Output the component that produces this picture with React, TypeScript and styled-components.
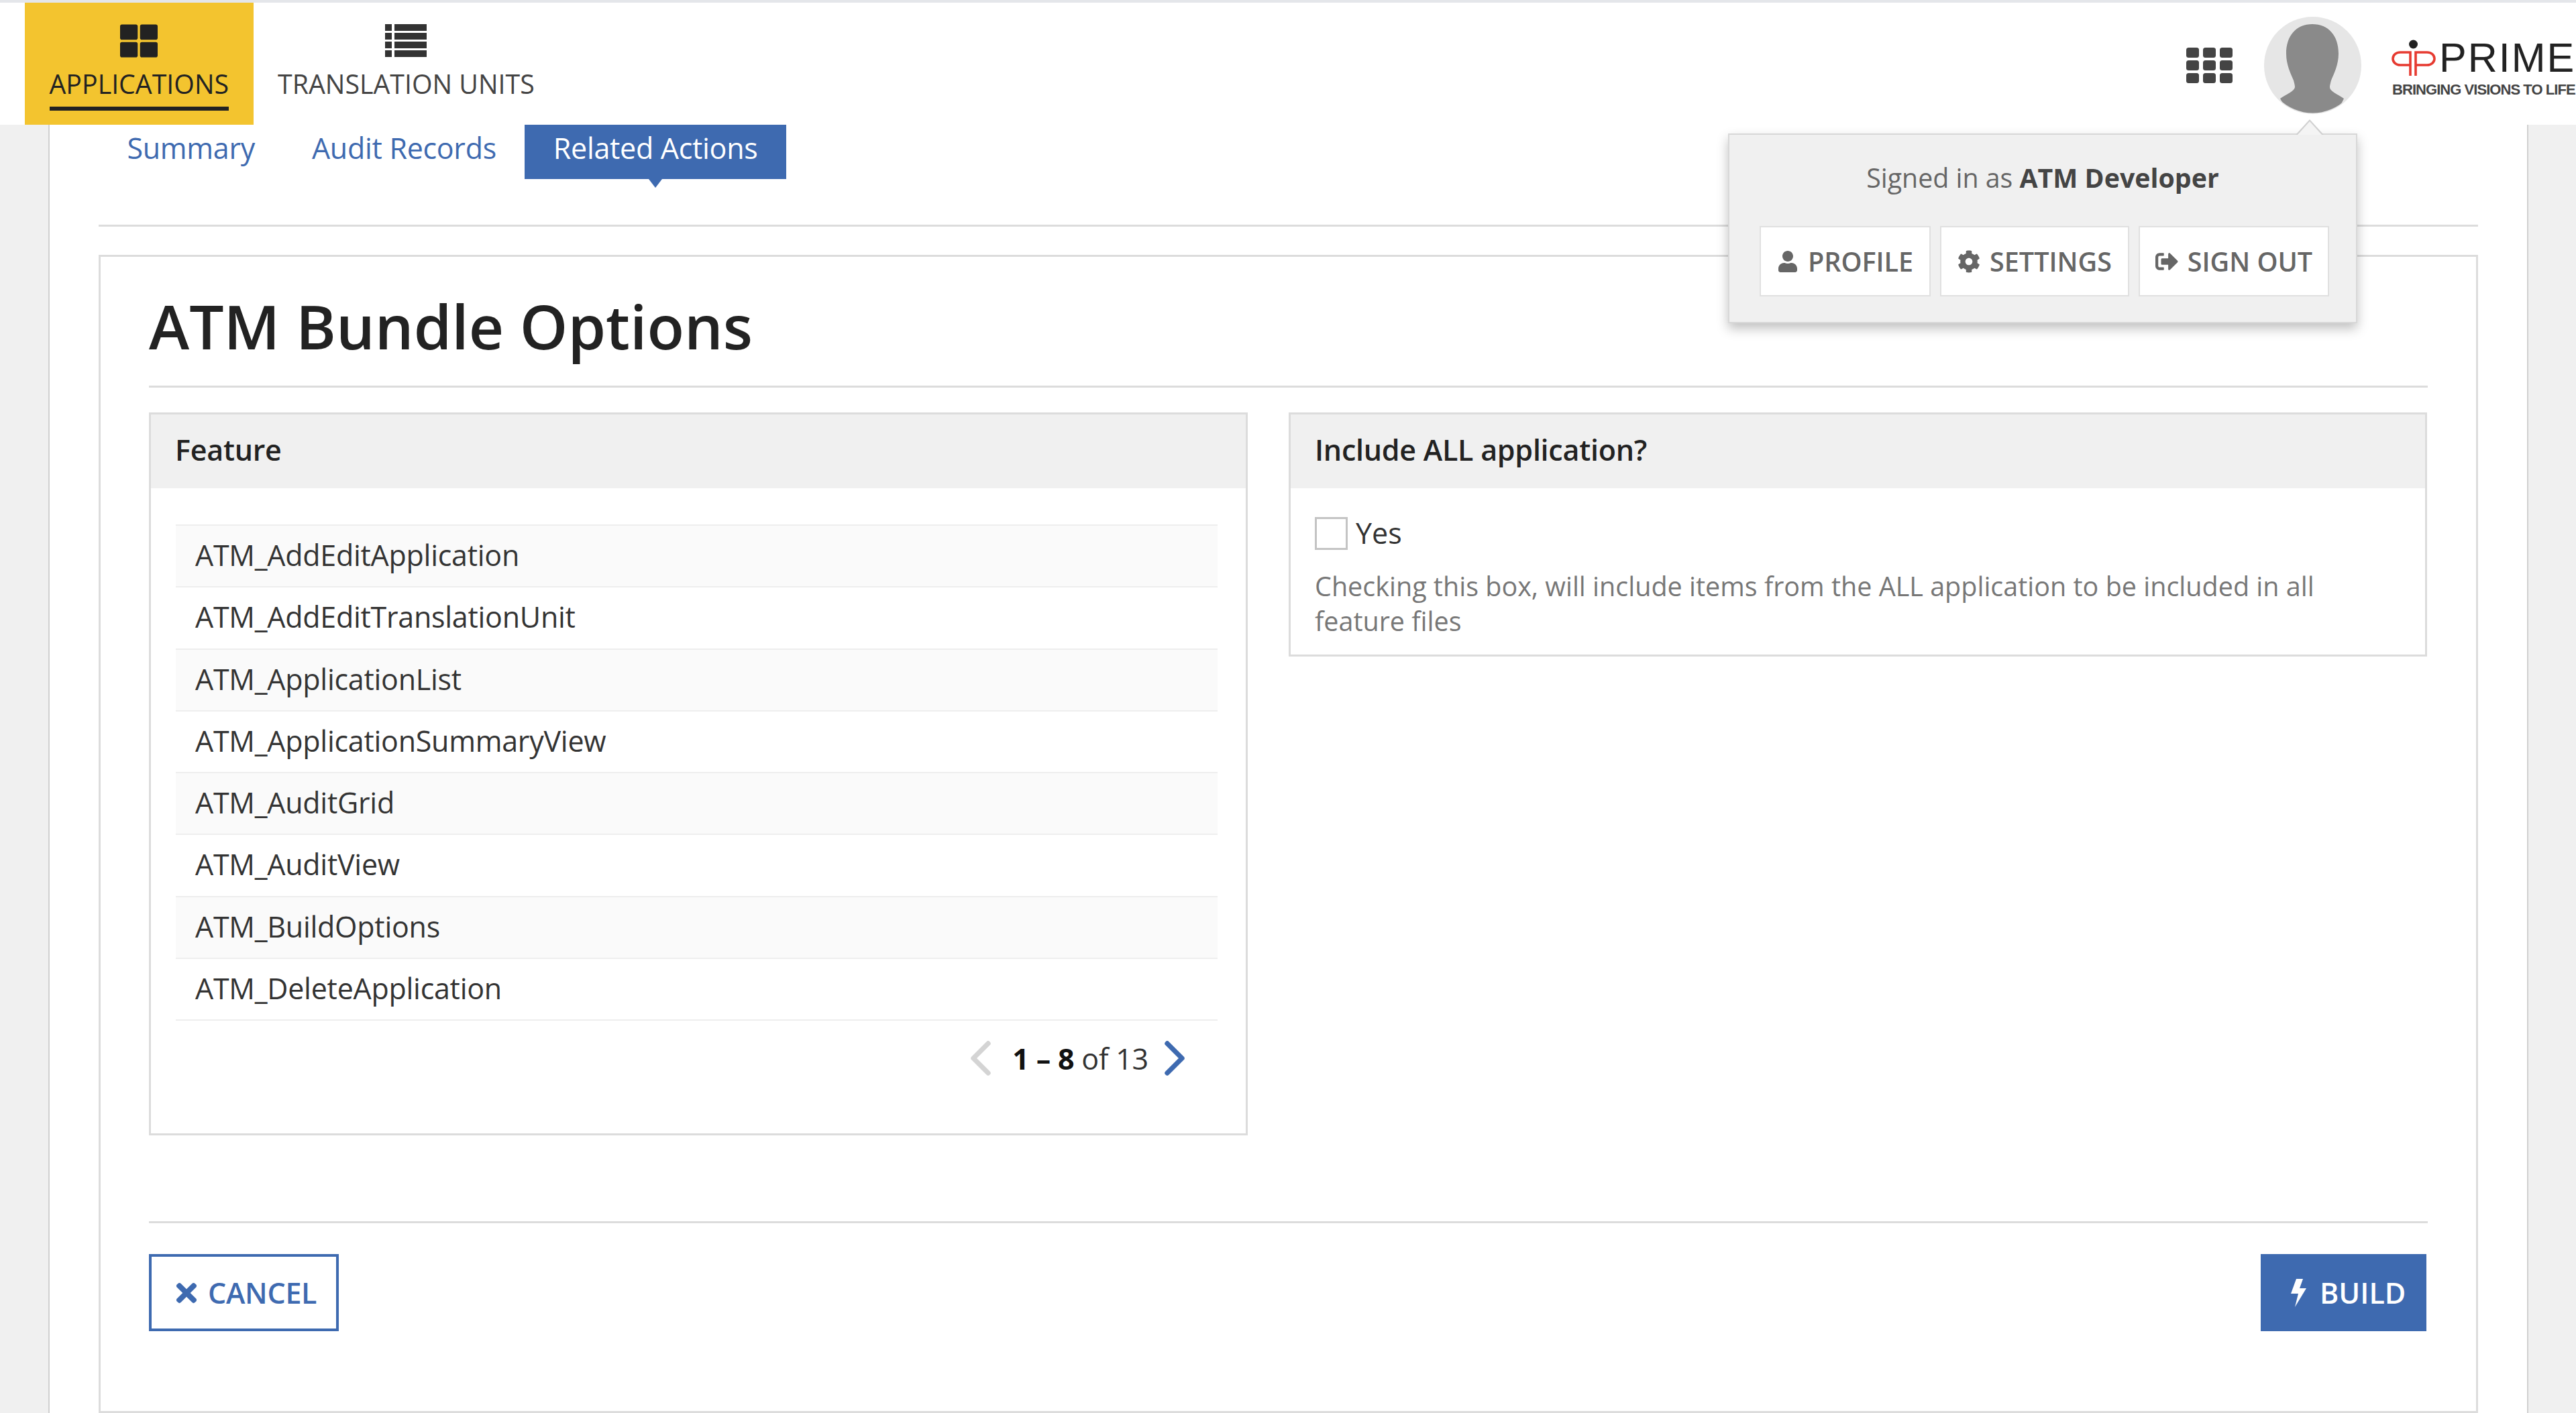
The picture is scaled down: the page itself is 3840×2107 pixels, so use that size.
import React from 'react';
import styled, { createGlobalStyle } from 'styled-components';
import { FaUser, FaCog, FaSignOutAlt, FaTimes, FaThLarge } from 'react-icons/fa';
import { ChevronLeft, ChevronRight } from 'lucide-react';

const BLUE = '#3e6ab0';
const LINE = '#dcdcdc';

const FEATURES = [
  'ATM_AddEditApplication',
  'ATM_AddEditTranslationUnit',
  'ATM_ApplicationList',
  'ATM_ApplicationSummaryView',
  'ATM_AuditGrid',
  'ATM_AuditView',
  'ATM_BuildOptions',
  'ATM_DeleteApplication',
];

const ListIcon = () => (
  <svg width="62" height="50" viewBox="0 0 62 50" fill="#333">
    {[0, 13, 26, 39].map((y) => (
      <g key={y}>
        <rect x="0" y={y} width="10" height="10" />
        <rect x="14" y={y} width="48" height="10" />
      </g>
    ))}
  </svg>
);

const GridIcon = () => (
  <svg width="69" height="53" viewBox="0 0 69 53" fill="#444">
    {[0, 19, 38].map((y) =>
      [0, 25, 50].map((x) => <rect key={`${x}-${y}`} x={x} y={y} width="19" height="15" rx="3.5" />),
    )}
  </svg>
);

const BoltIcon = () => (
  <svg width="26" height="42" viewBox="0 0 26 42" fill="#fff">
    <path d="M9 0h10l-5 14h10L7 42l5-20H1z" />
  </svg>
);

const AvatarIcon = () => (
  <svg width="145" height="145" viewBox="0 0 145 145">
    <defs>
      <clipPath id="avatar-clip">
        <circle cx="72.5" cy="72.5" r="71" />
      </clipPath>
    </defs>
    <circle cx="72.5" cy="72.5" r="72.5" fill="#e6e6e6" />
    <path
      clipPath="url(#avatar-clip)"
      fill="#8a8a8a"
      d="M72 11C48 11 33 28 33 55c0 17 7 30 11 40 1 4 2 7 2 10-1 6-12 10-22 17L40 150h65l14-28c-10-7-21-11-21-17 0-3 1-6 2-10 4-10 11-23 11-40 0-27-15-44-39-44z"
    />
  </svg>
);

const LogoMark = () => (
  <svg width="66" height="54" viewBox="0 0 66 54" fill="none">
    <circle cx="32.5" cy="7" r="6.5" fill="#222" />
    <path
      d="M28 54V19H13C7 19 2 23 2 28.5S7 38 13 38H28M36 54V19H53C59 19 64 23 64 28.5S59 38 53 38H36"
      stroke="#e63a30"
      strokeWidth="3.6"
    />
  </svg>
);

const App: React.FC = () => {
  return (
    <Page>
      <GlobalStyle />
      <TopBar>
        <NavItem $active>
          <NavIcon>
            <FaThLarge size={56} color="#222" />
          </NavIcon>
          <NavLabel $active>APPLICATIONS</NavLabel>
        </NavItem>
        <NavItem>
          <NavIcon>
            <ListIcon />
          </NavIcon>
          <NavLabel>TRANSLATION UNITS</NavLabel>
        </NavItem>
        <HeaderRight>
          <GridIcon />
          <AvatarIcon />
          <Logo>
            <LogoTop>
              <LogoMark />
              <LogoName>PRIME</LogoName>
            </LogoTop>
            <LogoTag>BRINGING VISIONS TO LIFE</LogoTag>
          </Logo>
        </HeaderRight>
        <UserPopover>
          <SignedIn>
            Signed in as <strong>ATM Developer</strong>
          </SignedIn>
          <PopoverButtons>
            <PopoverButton $width={255}>
              <FaUser size={32} /> PROFILE
            </PopoverButton>
            <PopoverButton $width={282}>
              <FaCog size={34} /> SETTINGS
            </PopoverButton>
            <PopoverButton $width={284}>
              <FaSignOutAlt size={34} /> SIGN OUT
            </PopoverButton>
          </PopoverButtons>
        </UserPopover>
      </TopBar>

      <Content>
        <Tabs>
          <Tab>Summary</Tab>
          <Tab>Audit Records</Tab>
          <Tab $active>Related Actions</Tab>
        </Tabs>
        <Card>
          <Title>ATM Bundle Options</Title>
          <Panels>
            <FeaturePanel>
              <PanelHeader>Feature</PanelHeader>
              <FeatureList>
                {FEATURES.map((name) => (
                  <FeatureRow key={name}>{name}</FeatureRow>
                ))}
              </FeatureList>
              <Pager>
                <ChevronLeft size={88} color="#d4d4d4" strokeWidth={2} />
                <PagerText>
                  <b>1 – 8</b> of 13
                </PagerText>
                <ChevronRight size={88} color={BLUE} strokeWidth={2} />
              </Pager>
            </FeaturePanel>
            <IncludePanel>
              <PanelHeader>Include ALL application?</PanelHeader>
              <IncludeBody>
                <CheckRow>
                  <CheckBox />
                  Yes
                </CheckRow>
                <HelpText>
                  Checking this box, will include items from the ALL application to be included in all feature files
                </HelpText>
              </IncludeBody>
            </IncludePanel>
          </Panels>
          <Footer>
            <CancelButton>
              <FaTimes size={44} /> CANCEL
            </CancelButton>
            <BuildButton>
              <BoltIcon /> BUILD
            </BuildButton>
          </Footer>
        </Card>
      </Content>
    </Page>
  );
};

export default App;

const GlobalStyle = createGlobalStyle`
  html, body {
    margin: 0;
    padding: 0;
    background: #f0f0f0;
  }
  * {
    box-sizing: border-box;
  }
`;

const Page = styled.div`
  width: 3840px;
  height: 2107px;
  overflow: hidden;
  background: #f0f0f0;
  font-family: 'Open Sans', 'Liberation Sans', sans-serif;
  color: #222;
`;

const TopBar = styled.header`
  position: relative;
  display: flex;
  height: 186px;
  padding-left: 37px;
  background: #fff;
  border-top: 4px solid #e4e6ea;
`;

const NavItem = styled.div<{ $active?: boolean }>`
  display: flex;
  flex-direction: column;
  align-items: center;
  padding: 29px 36.5px 0;
  background: ${({ $active }) => ($active ? '#f3c42f' : 'transparent')};
`;

const NavIcon = styled.div`
  display: flex;
  align-items: center;
  height: 56px;
`;

const NavLabel = styled.span<{ $active?: boolean }>`
  margin-top: 10px;
  padding-bottom: 8px;
  font-size: 39.3px;
  line-height: 52px;
  color: ${({ $active }) => ($active ? '#222' : '#444')};
  border-bottom: 6px solid ${({ $active }) => ($active ? '#222' : 'transparent')};
`;

const HeaderRight = styled.div`
  display: flex;
  align-items: center;
  gap: 47px;
  height: 145px;
  margin: 21px 0 0 auto;
`;

const Logo = styled.div`
  display: flex;
  flex-direction: column;
  width: 277px;
  height: 100%;
  margin-left: -4px;
  padding: 34px 0 0 2px;
  overflow: hidden;
`;

const LogoTop = styled.div`
  display: flex;
  align-items: flex-start;
  gap: 5px;
  height: 54px;
`;

const LogoName = styled.span`
  margin-top: -3px;
  font-family: 'Liberation Sans', sans-serif;
  font-size: 61px;
  letter-spacing: 2px;
  line-height: 1;
  color: #222;
`;

const LogoTag = styled.span`
  margin: 10px 0 0 1px;
  font-family: 'Liberation Sans', sans-serif;
  font-size: 22px;
  font-weight: 700;
  letter-spacing: -0.95px;
  line-height: 1;
  white-space: nowrap;
  color: #444;
`;

const UserPopover = styled.div`
  position: absolute;
  z-index: 5;
  top: 195px;
  left: 2576px;
  width: 938px;
  height: 283px;
  padding: 0 45px;
  background: #f0f0f0;
  border: 2px solid #d8d8d8;
  box-shadow: 0 8px 16px rgba(0, 0, 0, 0.25);

  &::before {
    content: '';
    position: absolute;
    top: -23px;
    right: 48px;
    border-left: 21px solid transparent;
    border-right: 21px solid transparent;
    border-bottom: 23px solid #d0d0d0;
  }

  &::after {
    content: '';
    position: absolute;
    top: -20px;
    right: 51px;
    border-left: 18px solid transparent;
    border-right: 18px solid transparent;
    border-bottom: 20px solid #f4f4f4;
  }
`;

const SignedIn = styled.div`
  height: 136px;
  padding-top: 36px;
  font-size: 39.3px;
  line-height: 56px;
  text-align: center;
  color: #666;

  strong {
    font-weight: 700;
    color: #444;
  }
`;

const PopoverButtons = styled.div`
  display: flex;
  gap: 14px;
`;

const PopoverButton = styled.div<{ $width: number }>`
  display: flex;
  flex: none;
  align-items: center;
  justify-content: center;
  gap: 14px;
  width: ${({ $width }) => $width}px;
  height: 105px;
  background: #fff;
  border: 2px solid #e0e0e0;
  font-size: 39.5px;
  font-weight: 600;
  color: #666;
`;

const Content = styled.main`
  display: flex;
  flex-direction: column;
  height: 1921px;
  margin: 0 71px 0 72px;
  padding: 0 73px;
  background: #fff;
  border-left: 2px solid #d0d0d0;
  border-right: 2px solid #d0d0d0;
`;

const Tabs = styled.nav`
  display: flex;
  flex: none;
  height: 152px;
  border-bottom: 3px solid ${LINE};
`;

const Tab = styled.div<{ $active?: boolean }>`
  position: relative;
  height: 81px;
  padding: 0 42.5px;
  font-size: 43px;
  letter-spacing: -0.3px;
  line-height: 70px;
  color: ${({ $active }) => ($active ? '#fff' : BLUE)};
  background: ${({ $active }) => ($active ? BLUE : 'transparent')};

  &::after {
    content: ${({ $active }) => ($active ? "''" : 'none')};
    position: absolute;
    left: 50%;
    bottom: -13px;
    margin-left: -10px;
    border-left: 10px solid transparent;
    border-right: 10px solid transparent;
    border-top: 13px solid ${BLUE};
  }
`;

const Card = styled.section`
  flex: none;
  height: 1727px;
  margin-top: 42px;
  padding: 0 72px;
  border: 3px solid ${LINE};
`;

const Title = styled.h1`
  height: 195px;
  margin: 0 0 37px;
  font-size: 91px;
  line-height: 207px;
  font-weight: 600;
  color: #222;
  border-bottom: 3px solid ${LINE};
`;

const Panels = styled.div`
  display: flex;
  align-items: flex-start;
  gap: 61px;
  height: 1209px;
  border-bottom: 3px solid ${LINE};
`;

const FeaturePanel = styled.div`
  flex: none;
  width: 1638px;
  height: 1078px;
  border: 3px solid ${LINE};
`;

const IncludePanel = styled.div`
  flex: none;
  width: 1697px;
  height: 364px;
  border: 3px solid ${LINE};
`;

const PanelHeader = styled.div`
  height: 110px;
  padding-left: 36px;
  background: #f0f0f0;
  font-size: 43px;
  letter-spacing: -0.25px;
  font-weight: 600;
  line-height: 106px;
  color: #222;
`;

const FeatureList = styled.ul`
  margin: 54px 42px 0 37px;
  padding: 0;
  list-style: none;
  border-top: 2px solid #eee;
`;

const FeatureRow = styled.li`
  height: 92.3px;
  padding-left: 29px;
  border-bottom: 2px solid #eee;
  font-size: 43px;
  letter-spacing: -0.27px;
  line-height: 88px;
  color: #333;

  &:nth-child(odd) {
    background: #fafafa;
  }
`;

const Pager = styled.div`
  display: flex;
  align-items: center;
  justify-content: flex-end;
  height: 112px;
  margin-right: 62px;
`;

const PagerText = styled.span`
  margin: 0 -5px 0 3px;
  font-size: 43px;
  letter-spacing: -0.2px;
  color: #333;

  b {
    font-weight: 700;
    color: #111;
  }
`;

const IncludeBody = styled.div`
  padding: 42px 36px 0;
`;

const CheckRow = styled.label`
  display: flex;
  align-items: center;
  gap: 12px;
  font-size: 43px;
  line-height: 50px;
  color: #333;
`;

const CheckBox = styled.span`
  width: 49px;
  height: 49px;
  background: #fff;
  border: 3px solid #c4c4c4;
`;

const HelpText = styled.p`
  margin: 28px 0 0;
  font-size: 39.5px;
  line-height: 52px;
  color: #777;
`;

const Footer = styled.div`
  display: flex;
  justify-content: space-between;
  padding-top: 46px;
`;

const CancelButton = styled.div`
  display: flex;
  align-items: center;
  gap: 10px;
  width: 283px;
  height: 115px;
  padding-left: 30px;
  border: 4px solid ${BLUE};
  font-size: 43px;
  letter-spacing: -0.3px;
  font-weight: 600;
  color: ${BLUE};
`;

const BuildButton = styled.div`
  display: flex;
  align-items: center;
  gap: 18px;
  width: 247px;
  height: 115px;
  margin-right: 2px;
  padding-left: 44px;
  background: ${BLUE};
  font-size: 43px;
  font-weight: 600;
  color: #fff;
`;
